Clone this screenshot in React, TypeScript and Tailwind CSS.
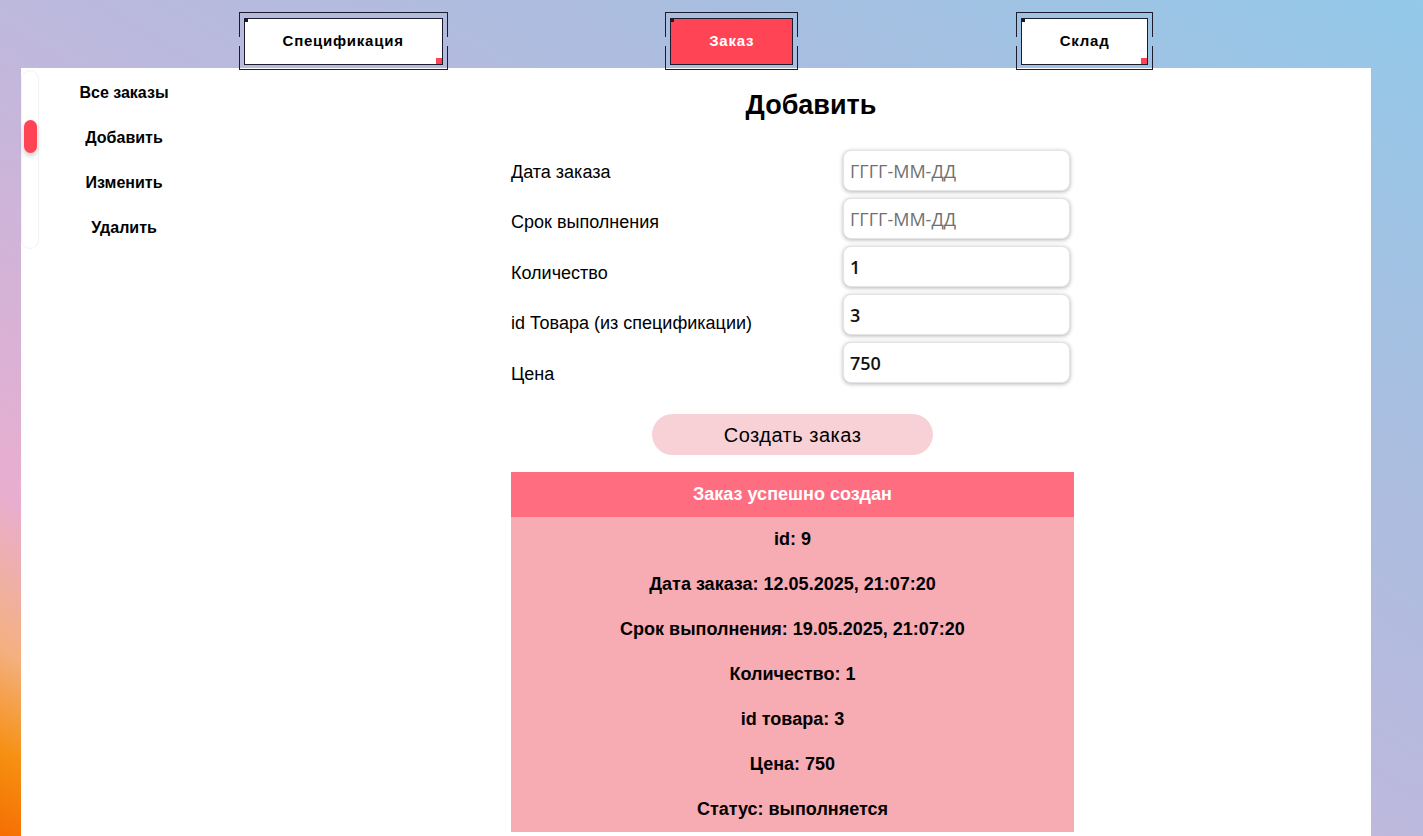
import React from "react";

const navItems = [
  { label: "Спецификация", active: false },
  { label: "Заказ", active: true },
  { label: "Склад", active: false },
];

const sideItems = ["Все заказы", "Добавить", "Изменить", "Удалить"];

const fields = [
  { label: "Дата заказа", value: "", placeholder: "ГГГГ-ММ-ДД" },
  { label: "Срок выполнения", value: "", placeholder: "ГГГГ-ММ-ДД" },
  { label: "Количество", value: "1", placeholder: "" },
  { label: "id Товара (из спецификации)", value: "3", placeholder: "" },
  { label: "Цена", value: "750", placeholder: "" },
];

const resultLines = [
  "id: 9",
  "Дата заказа: 12.05.2025, 21:07:20",
  "Срок выполнения: 19.05.2025, 21:07:20",
  "Количество: 1",
  "id товара: 3",
  "Цена: 750",
  "Статус: выполняется",
];

function NavButton({ label, active }: { label: string; active: boolean }) {
  return (
    <div className="relative border-t border-b border-[#1c1c2c] px-[5px] pt-[5px] pb-[4px]">
      {/* side lines with a gap in the middle */}
      <span className="absolute left-0 top-0 h-[24px] w-px bg-[#1c1c2c]" />
      <span className="absolute left-0 bottom-0 h-[23px] w-px bg-[#1c1c2c]" />
      <span className="absolute right-0 top-0 h-[24px] w-px bg-[#1c1c2c]" />
      <span className="absolute right-0 bottom-0 h-[23px] w-px bg-[#1c1c2c]" />
      <div
        className={
          "relative flex h-[47px] items-center border border-[#1c1c2c] px-[38px] text-[15px] font-bold tracking-[0.75px] " +
          (active ? "bg-[#ff4455] text-white" : "bg-white text-black")
        }
      >
        <span className="absolute left-0 top-0 h-[3px] w-[3px] bg-[#1c1c2c]" />
        <span className="absolute right-0 bottom-0 h-[6px] w-[6px] bg-[#ff4455]" />
        {label}
      </div>
    </div>
  );
}

export default function App() {
  return (
    <div
      className="min-h-screen w-full bg-[linear-gradient(to_top_right,#f56800_0%,#f69012_6%,#f4b080_12%,#e9aecf_21%,#d6b2d6_32%,#bdb9dd_50%,#a8bee0_75%,#93c9e9_100%)] font-['Liberation_Sans',Arial,sans-serif] text-black"
    >
      {/* Top navigation */}
      <div className="relative z-10 ml-[21px] flex w-[1350px] justify-evenly pt-[12px]">
        {navItems.map((item) => (
          <NavButton key={item.label} label={item.label} active={item.active} />
        ))}
      </div>

      {/* Main panel */}
      <div className="ml-[21px] -mt-[2px] flex min-h-[768px] w-[1350px] bg-white pb-[20px]">
        {/* Sidebar */}
        <div className="flex w-[188px] shrink-0">
          <div className="relative mt-[2px] h-[179px] w-[18px] rounded-[10px] border border-[#f3f3f3]">
            <span className="absolute left-[2px] top-[49px] h-[33px] w-[13px] rounded-full bg-[#ff4455] shadow-[0_3px_5px_rgba(0,0,0,0.2)]" />
          </div>
          <div className="flex w-[170px] flex-col pt-[2.5px]">
            {sideItems.map((s) => (
              <div key={s} className="flex h-[45px] items-center justify-center text-[16px] font-bold">
                {s}
              </div>
            ))}
          </div>
        </div>

        {/* Content */}
        <div className="ml-[302px] w-[563px]">
          <h1 className="mt-[21px] h-[32px] pl-[37px] text-center text-[27px] font-bold leading-[32px]">Добавить</h1>

          <div className="mt-[25.75px] flex justify-between">
            <div className="flex flex-col">
              {fields.map((f) => (
                <div key={f.label} className="flex h-[50.5px] items-center text-[18px]">
                  {f.label}
                </div>
              ))}
            </div>
            <div className="mr-[4px] flex w-[227px] flex-col gap-[7px] pt-[3.25px]">
              {fields.map((f) => (
                <input
                  key={f.label}
                  type="text"
                  defaultValue={f.value}
                  placeholder={f.placeholder}
                  className="h-[41px] w-full rounded-lg border border-[#e4e4e4] bg-white px-[6px] font-['Open_Sans',sans-serif] text-[18px] font-semibold text-[#111] shadow-[0_1px_4px_rgba(0,0,0,0.3)] outline-none placeholder:font-medium placeholder:text-[#707070]"
                />
              ))}
            </div>
          </div>

          <div className="mt-[14.75px] flex justify-center">
            <button className="h-[41px] w-[281px] rounded-full bg-[#f7d1d6] text-[20px] tracking-[0.5px] text-black">
              Создать заказ
            </button>
          </div>

          <div className="mt-[17px]">
            <div className="flex h-[45px] items-center justify-center bg-[#ff6e80] text-[18px] font-bold text-white">
              Заказ успешно создан
            </div>
            <div className="bg-[#f7abb2]">
              {resultLines.map((line) => (
                <div key={line} className="flex h-[45px] items-center justify-center text-[18px] font-bold">
                  {line}
                </div>
              ))}
            </div>
          </div>
        </div>
      </div>
    </div>
  );
}
